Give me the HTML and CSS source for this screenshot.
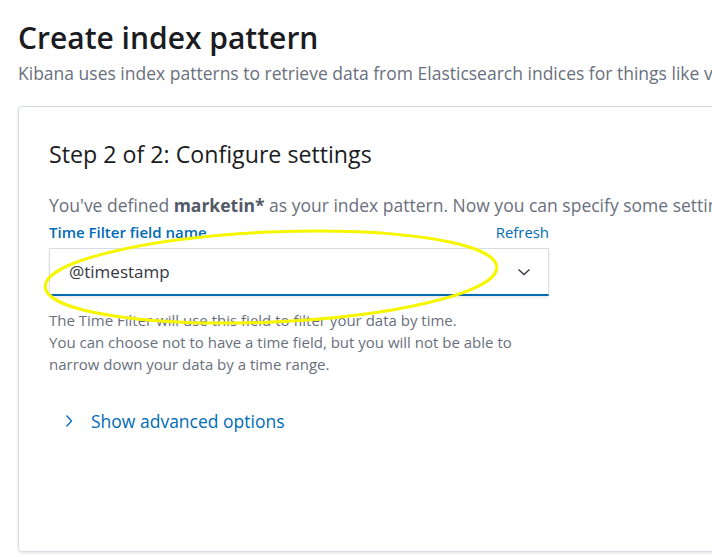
FILE: index.html
```html
<!DOCTYPE html>
<html>
<head>
<meta charset="utf-8">
<link rel="stylesheet" href="styles.css">
</head>
<body>
<div class="page">
  <h1 class="title">Create index pattern</h1>
  <p class="subtitle">Kibana uses index patterns to retrieve data from Elasticsearch indices for things like visualizations.</p>
  <div class="card">
    <h2 class="step">Step 2 of 2: Configure settings</h2>
    <p class="intro">You've defined <strong>marketin*</strong> as your index pattern. Now you can specify some settings before we create it.</p>
    <div class="field">
      <div class="label-row">
        <span class="label">Time Filter field name</span>
        <span class="refresh">Refresh</span>
      </div>
      <div class="select">
        <span class="value">@timestamp</span>
        <svg class="chev-down" width="16" height="16" viewBox="0 0 16 16"><path d="M2.5 5.5 L8 10.5 L13.5 5.5" fill="none" stroke="#343741" stroke-width="1.3"/></svg>
      </div>
      <p class="help">The Time Filter will use this field to filter your data by time.<br>You can choose not to have a time field, but you will not be able to<br>narrow down your data by a time range.</p>
    </div>
    <div class="advanced">
      <svg class="chev-right" width="16" height="16" viewBox="0 0 16 16"><path d="M5.5 2.5 L10.5 8 L5.5 13.5" fill="none" stroke="#006BB4" stroke-width="1.3"/></svg>
      <span class="adv-text">Show advanced options</span>
    </div>
  </div>
  <svg class="annotation" width="712" height="557" viewBox="0 0 712 557">
    <ellipse cx="271" cy="277" rx="226" ry="45" transform="rotate(-2.5 271 277)" fill="none" stroke="#f6f600" stroke-width="3"/>
  </svg>
</div>
</body>
</html>
```
FILE: styles.css
```css
html, body {
  margin: 0;
  padding: 0;
  background: #fff;
  overflow: hidden;
}
body {
  font-family: "Open Sans", "Noto Sans", sans-serif;
  width: 712px;
  height: 557px;
}
.page {
  position: relative;
  padding: 20px 0 0 18px;
  width: 694px;
  height: 537px;
  overflow: hidden;
}
.title {
  margin: 0;
  font-size: 30px;
  font-weight: 600;
  line-height: 36px;
  color: #1a1c21;
  white-space: nowrap;
}
.subtitle {
  margin: 5px 0 0;
  font-size: 17.5px;
  line-height: 24px;
  color: #69707d;
  white-space: nowrap;
}
.card {
  margin-top: 21px;
  width: 800px;
  height: 446px;
  border: 1px solid #d3dae6;
  border-radius: 4px;
  box-shadow: 0 1px 3px rgba(0,0,0,0.12);
  padding: 31px 0 0 30px;
  box-sizing: border-box;
}
.step {
  margin: 0;
  font-size: 23.2px;
  font-weight: 500;
  line-height: 32px;
  color: #1a1c21;
  white-space: nowrap;
}
.intro {
  margin: 23px 0 0;
  font-size: 17.5px;
  line-height: 24px;
  color: #69707d;
  white-space: nowrap;
}
.intro strong {
  font-weight: 700;
  color: #535966;
}
.field {
  width: 500px;
}
.label-row {
  display: flex;
  justify-content: space-between;
  align-items: baseline;
  margin-top: 5px;
  line-height: 20px;
}
.label {
  font-size: 15px;
  font-weight: 600;
  color: #006bb4;
}
.refresh {
  font-size: 14.9px;
  color: #006bb4;
}
.select {
  margin-top: 6px;
  height: 48px;
  box-sizing: border-box;
  border: 1px solid #d7dce3;
  border-bottom: 2px solid #006bb4;
  background: #fff;
  box-shadow: 0 2px 3px rgba(0,0,0,0.08);
  display: flex;
  align-items: center;
  justify-content: space-between;
  padding: 0 16px 0 19px;
}
.value {
  font-size: 17px;
  color: #343741;
}
.help {
  margin: 13px 0 0;
  font-size: 15px;
  line-height: 22px;
  color: #69707d;
  white-space: nowrap;
}
.advanced {
  margin-top: 34px;
  display: flex;
  align-items: center;
  gap: 14px;
  padding-left: 12px;
}
.adv-text {
  font-size: 17.5px;
  color: #006bb4;
}
.annotation {
  position: absolute;
  left: 0;
  top: 0;
  pointer-events: none;
}
```
